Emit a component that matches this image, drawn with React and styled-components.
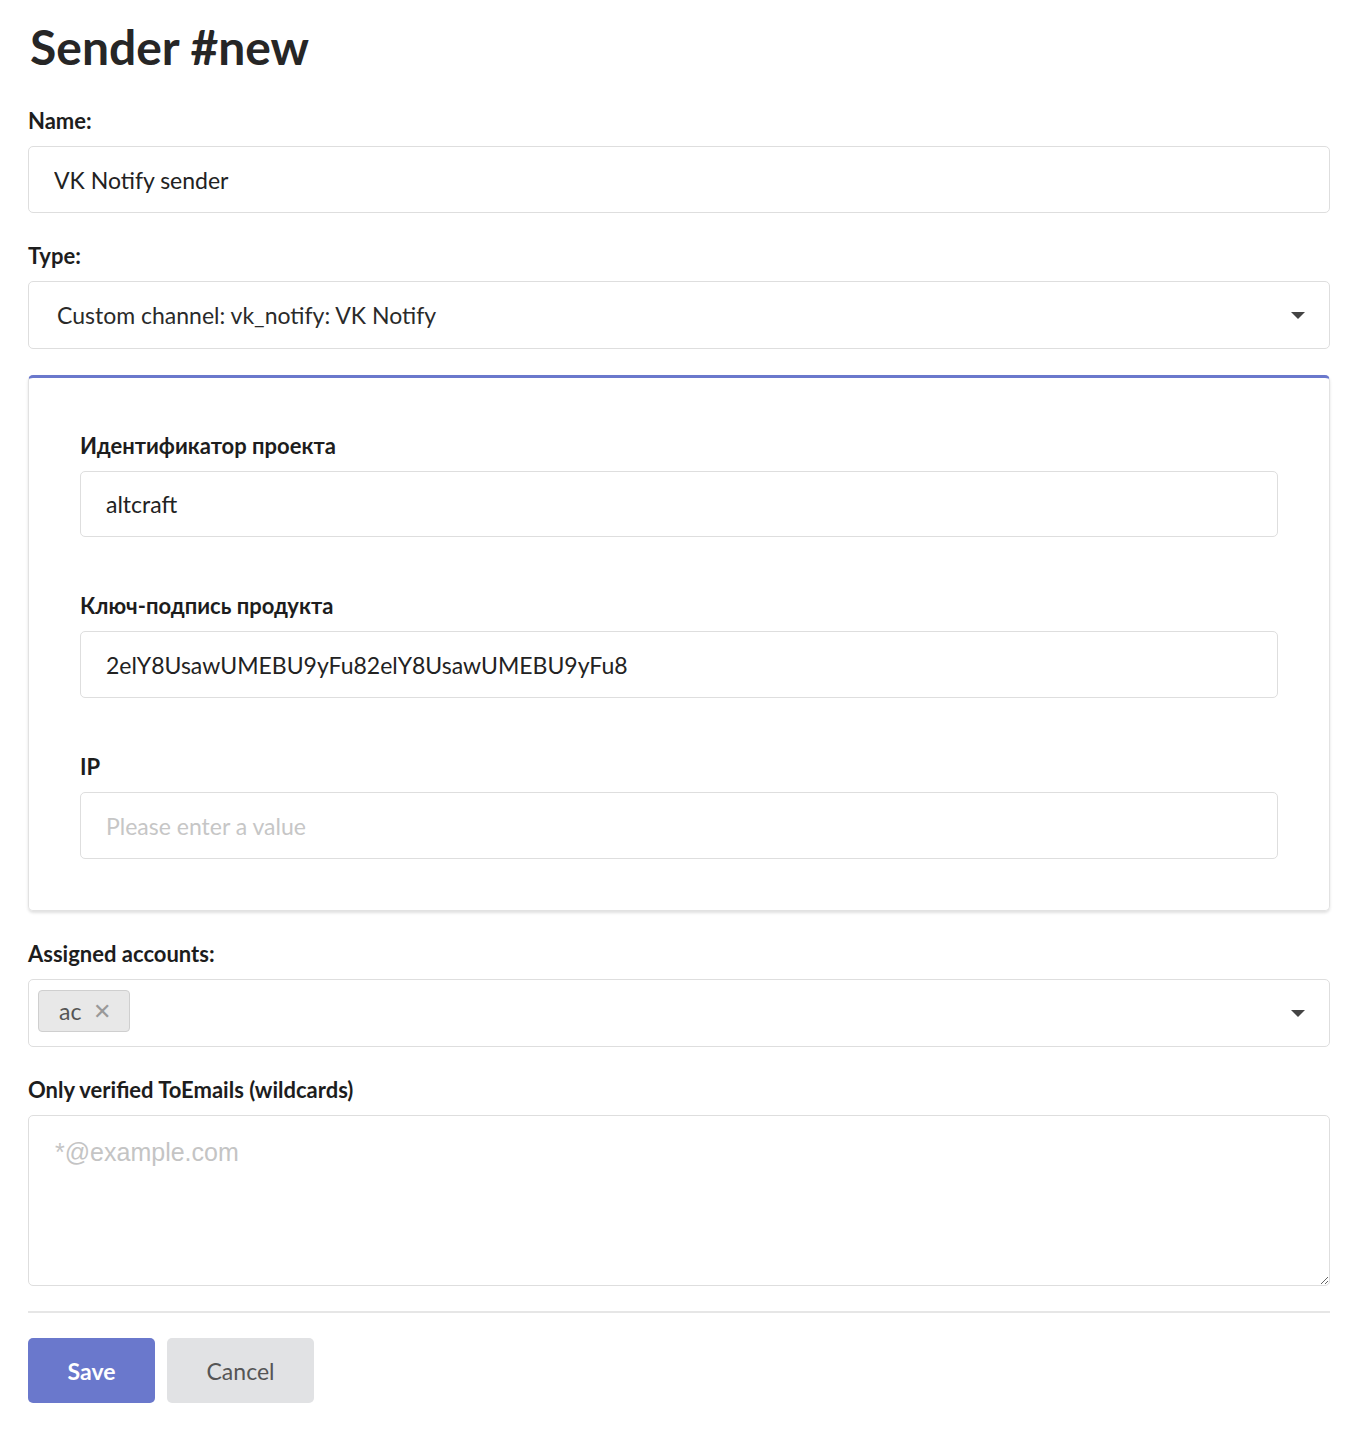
import React from "react";
import styled, { createGlobalStyle } from "styled-components";

const Global = createGlobalStyle`
  html, body { margin: 0; padding: 0; background: #fff; }
  body { font-family: Lato, "Noto Sans", sans-serif; color: #2a2a2a; }
  * { box-sizing: border-box; }
`;

const Page = styled.div`
  padding: 16px 30px 26px 28px;
  width: 1360px;
`;

const Title = styled.h1`
  margin: 0 0 0 2px;
  font-size: 48px;
  font-weight: 700;
  line-height: 62px;
  color: #262626;
`;

const Field = styled.div`
  display: flex;
  flex-direction: column;
  margin-top: ${(p) => p.$top || 0}px;
`;

const Label = styled.label`
  font-size: 22px;
  font-weight: 700;
  color: #1d1d1d;
  line-height: 26px;
  margin-bottom: 12px;
`;

const Input = styled.input`
  height: ${(p) => p.$h || 66}px;
  border: 1px solid #dedede;
  border-radius: 5px;
  padding: 0 25px;
  font-family: Lato, "Noto Sans", sans-serif;
  font-size: 23px;
  color: #222;
  background: #fff;
  outline: none;
  &::placeholder { color: #c6c6c6; }
`;

const SelectBox = styled.div`
  height: ${(p) => p.$h || 68}px;
  border: 1px solid #dedede;
  border-radius: 5px;
  display: flex;
  align-items: center;
  padding: 0 24px 0 ${(p) => p.$pl || 28}px;
  font-size: 23px;
  color: #2a2a2a;
  gap: 10px;
`;

const SelectValue = styled.span`
  flex: 1;
  display: flex;
  align-items: center;
`;

const Caret = styled.span`
  width: 0;
  height: 0;
  border-left: 7px solid transparent;
  border-right: 7px solid transparent;
  border-top: 7px solid #444;
`;

const Panel = styled.div`
  margin-top: 26px;
  border: 1px solid #e2e2e2;
  border-top: 3px solid #6a78cc;
  border-radius: 5px;
  box-shadow: 0 2px 3px rgba(0, 0, 0, 0.12);
  padding: 55px 51px 51px 51px;
  display: flex;
  flex-direction: column;
  gap: 56px;
`;

const Tag = styled.span`
  display: inline-flex;
  align-items: center;
  gap: 12px;
  height: 42px;
  margin-bottom: 4px;
  padding: 0 18px 0 20px;
  background: #e8e8e8;
  border: 1px solid #cfcfcf;
  border-radius: 4px;
  font-size: 23px;
  color: #555;
`;

const TagX = styled.span`
  font-size: 22px;
  color: #999;
  line-height: 1;
`;

const TextArea = styled.textarea`
  height: 171px;
  border: 1px solid #dedede;
  border-radius: 5px;
  padding: 22px 26px;
  font-family: "Liberation Sans", Arial, sans-serif;
  font-size: 25px;
  resize: vertical;
  outline: none;
  &::placeholder { color: #c4c4c4; }
`;

const Divider = styled.hr`
  border: 0;
  border-top: 2px solid #e6e6e6;
  margin: 25px 0 25px;
`;

const Buttons = styled.div`
  display: flex;
  gap: 12px;
`;

const Button = styled.button`
  height: 65px;
  width: ${(p) => p.$w}px;
  border: 0;
  border-radius: 5px;
  font-family: Lato, "Noto Sans", sans-serif;
  font-size: 23px;
  font-weight: ${(p) => (p.$primary ? 700 : 400)};
  background: ${(p) => (p.$primary ? "#6a78cc" : "#e1e2e4")};
  color: ${(p) => (p.$primary ? "#fff" : "#555")};
`;

export default function App() {
  return (
    <Page>
      <Global />
      <Title>Sender #new</Title>
      <Field $top={30}>
        <Label>Name:</Label>
        <Input $h={67} defaultValue="VK Notify sender" />
      </Field>
      <Field $top={30}>
        <Label>Type:</Label>
        <SelectBox>
          <SelectValue>Custom channel: vk_notify: VK Notify</SelectValue>
          <Caret />
        </SelectBox>
      </Field>
      <Panel>
        <Field>
          <Label>Идентификатор проекта</Label>
          <Input $h={66} defaultValue="altcraft" />
        </Field>
        <Field>
          <Label>Ключ-подпись продукта</Label>
          <Input $h={67} defaultValue="2elY8UsawUMEBU9yFu82elY8UsawUMEBU9yFu8" />
        </Field>
        <Field>
          <Label>IP</Label>
          <Input $h={67} placeholder="Please enter a value" />
        </Field>
      </Panel>
      <Field $top={30}>
        <Label>Assigned accounts:</Label>
        <SelectBox $pl={9} $h={68}>
          <SelectValue>
            <Tag>
              ac <TagX>✕</TagX>
            </Tag>
          </SelectValue>
          <Caret />
        </SelectBox>
      </Field>
      <Field $top={30}>
        <Label>Only verified ToEmails (wildcards)</Label>
        <TextArea placeholder="*@example.com" />
      </Field>
      <Divider />
      <Buttons>
        <Button $primary $w={127}>Save</Button>
        <Button $w={147}>Cancel</Button>
      </Buttons>
    </Page>
  );
}
